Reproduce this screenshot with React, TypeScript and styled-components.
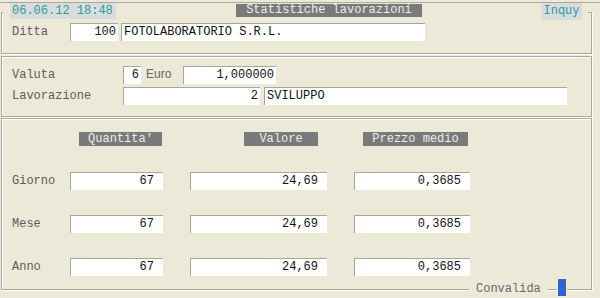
import React from 'react';
import styled, { createGlobalStyle } from 'styled-components';

const GlobalStyle = createGlobalStyle`
  html, body {
    margin: 0;
    padding: 0;
    background: #ece9d8;
  }
  body {
    font-family: "Liberation Mono", "DejaVu Sans Mono", monospace;
    font-size: 12px;
  }
`;

const Page = styled.div`
  width: 600px;
  height: 298px;
  box-sizing: border-box;
  padding-top: 2px;
  background: #ece9d8;
  overflow: hidden;
`;

const Rule = styled.div`
  height: 1px;
  background: #aca899;
`;

const Header = styled.div`
  position: relative;
  z-index: 1;
  display: flex;
  align-items: flex-start;
  margin-left: 3px;
  width: 585px;
  height: 17px;
  background: #ece9d8;
`;

const Stamp = styled.div<{ $w: number; $h: number; $ml: number; $center?: boolean }>`
  box-sizing: border-box;
  width: ${(p) => p.$w}px;
  height: ${(p) => p.$h}px;
  line-height: ${(p) => p.$h}px;
  margin-left: ${(p) => p.$ml}px;
  padding-left: ${(p) => (p.$center ? 0 : 2)}px;
  text-align: ${(p) => (p.$center ? 'center' : 'left')};
  background: #d9dcdc;
  color: #2e9a9a;
  white-space: pre;
`;

const Title = styled.div`
  margin-left: 120px;
  margin-top: 1px;
  width: 186px;
  height: 13px;
  line-height: 13px;
  text-align: center;
  background: #7a7a7a;
  color: #ececec;
  white-space: pre;
`;

const Group = styled.div<{ $h: number; $mt: number; $pt: number }>`
  position: relative;
  box-sizing: border-box;
  margin-left: 1px;
  margin-top: ${(p) => p.$mt}px;
  width: 591px;
  height: ${(p) => p.$h}px;
  padding: ${(p) => p.$pt}px 0 0 10px;
  border: 1px solid #aca899;
  box-shadow: inset 1px 1px 0 #fff, 1px 1px 0 #fff;
`;

const Row = styled.div<{ $mt?: number }>`
  display: flex;
  align-items: center;
  height: 18px;
  margin-top: ${(p) => p.$mt ?? 0}px;
`;

const Label = styled.span<{ $w: number }>`
  flex: none;
  width: ${(p) => p.$w}px;
  color: #5c5c5c;
  white-space: pre;
`;

const Field = styled.div<{ $w: number; $ml?: number; $left?: boolean; $pad?: number }>`
  flex: none;
  box-sizing: border-box;
  width: ${(p) => p.$w}px;
  height: 18px;
  line-height: 17px;
  margin-left: ${(p) => p.$ml ?? 0}px;
  padding: ${(p) => (p.$left ? `0 0 0 2px` : `0 ${p.$pad ?? 2}px 0 0`)};
  text-align: ${(p) => (p.$left ? 'left' : 'right')};
  background: #fff;
  border-top: 1px solid #a7a69a;
  border-left: 1px solid #a7a69a;
  color: #111;
  white-space: pre;
  overflow: hidden;
`;

const Unit = styled.span`
  flex: none;
  width: 24px;
  margin-left: 5px;
  margin-top: -2px;
  font-family: "Liberation Sans", Arial, sans-serif;
  font-size: 12px;
  color: #666;
`;

const ColHead = styled.div<{ $w: number; $ml: number }>`
  flex: none;
  width: ${(p) => p.$w}px;
  height: 14px;
  line-height: 14px;
  margin-left: ${(p) => p.$ml}px;
  text-align: center;
  background: #7a7a7a;
  color: #ececec;
  white-space: pre;
`;

const HeadRow = styled.div`
  display: flex;
  height: 14px;
`;

const Legend = styled.span`
  position: absolute;
  left: 467px;
  bottom: -7px;
  height: 14px;
  line-height: 14px;
  padding: 0 7px;
  background: #ece9d8;
  color: #6a6a6a;
`;

const ConfirmButton = styled.button`
  position: absolute;
  left: 555px;
  bottom: -8px;
  width: 10px;
  height: 19px;
  padding: 0;
  background: #2f62d4;
  border: 1px solid #f6efc6;
  cursor: pointer;
`;

const rows = [
  { label: 'Giorno', q: '67', v: '24,69', p: '0,3685' },
  { label: 'Mese', q: '67', v: '24,69', p: '0,3685' },
  { label: 'Anno', q: '67', v: '24,69', p: '0,3685' },
];

const App = () => {
  return (
    <Page>
      <GlobalStyle />
      <Rule />
      <Header>
        <Stamp $w={106} $h={16} $ml={7}>06.06.12 18:48</Stamp>
        <Title>Statistiche lavorazioni</Title>
        <Stamp $w={41} $h={17} $ml={119} $center>Inquy</Stamp>
      </Header>

      <Group $h={42} $mt={-8} $pt={10}>
        <Row>
          <Label $w={58}>Ditta</Label>
          <Field $w={48}>100</Field>
          <Field $w={304} $ml={3} $left>FOTOLABORATORIO S.R.L.</Field>
        </Row>
      </Group>

      <Group $h={61} $mt={2} $pt={9}>
        <Row>
          <Label $w={111}>Valuta</Label>
          <Field $w={18}>6</Field>
          <Unit>Euro</Unit>
          <Field $w={93} $ml={13}>1,000000</Field>
        </Row>
        <Row $mt={3}>
          <Label $w={111}>Lavorazione</Label>
          <Field $w={137}>2</Field>
          <Field $w={303} $ml={4} $left>SVILUPPO</Field>
        </Row>
      </Group>

      <Group $h={172} $mt={1} $pt={13}>
        <HeadRow>
          <ColHead $w={83} $ml={67}>Quantita'</ColHead>
          <ColHead $w={74} $ml={82}>Valore</ColHead>
          <ColHead $w={105} $ml={45}>Prezzo medio</ColHead>
        </HeadRow>
        {rows.map((r, i) => (
          <Row key={r.label} $mt={i === 0 ? 26 : 25}>
            <Label $w={58}>{r.label}</Label>
            <Field $w={93} $pad={9}>{r.q}</Field>
            <Field $w={137} $ml={27} $pad={9}>{r.v}</Field>
            <Field $w={116} $ml={27} $pad={9}>{r.p}</Field>
          </Row>
        ))}
        <Legend>Convalida</Legend>
        <ConfirmButton aria-label="Convalida" />
      </Group>
    </Page>
  );
};

export default App;
